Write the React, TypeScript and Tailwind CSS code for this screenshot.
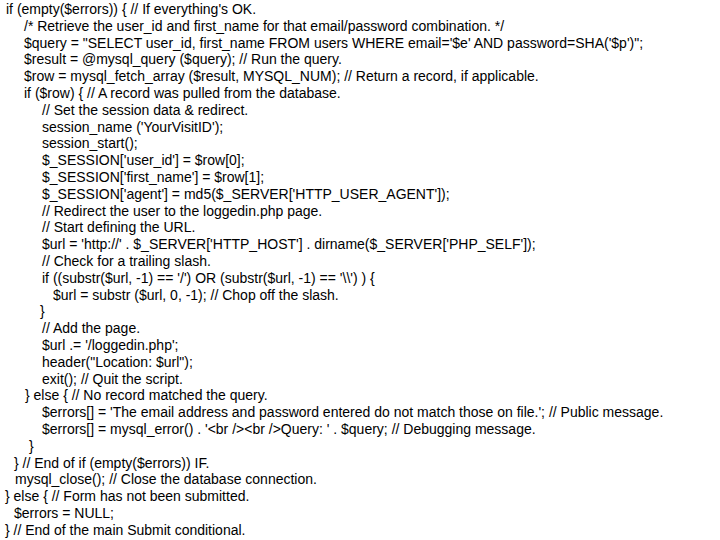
const lines: [number, string][] = [
  [6, "if (empty($errors)) { // If everything's OK."],
  [24, "/* Retrieve the user_id and first_name for that email/password combination. */"],
  [24, "$query = \"SELECT user_id, first_name FROM users WHERE email='$e' AND password=SHA('$p')\";"],
  [24, "$result = @mysql_query ($query); // Run the query."],
  [24, "$row = mysql_fetch_array ($result, MYSQL_NUM); // Return a record, if applicable."],
  [24, "if ($row) { // A record was pulled from the database."],
  [42, "// Set the session data & redirect."],
  [42, "session_name ('YourVisitID');"],
  [42, "session_start();"],
  [42, "$_SESSION['user_id'] = $row[0];"],
  [42, "$_SESSION['first_name'] = $row[1];"],
  [42, "$_SESSION['agent'] = md5($_SERVER['HTTP_USER_AGENT']);"],
  [42, "// Redirect the user to the loggedin.php page."],
  [42, "// Start defining the URL."],
  [42, "$url = 'http://' . $_SERVER['HTTP_HOST'] . dirname($_SERVER['PHP_SELF']);"],
  [42, "// Check for a trailing slash."],
  [42, "if ((substr($url, -1) == '/') OR (substr($url, -1) == '\\\\') ) {"],
  [53, "$url = substr ($url, 0, -1); // Chop off the slash."],
  [40, "}"],
  [42, "// Add the page."],
  [42, "$url .= '/loggedin.php';"],
  [42, "header(\"Location: $url\");"],
  [42, "exit(); // Quit the script."],
  [25, "} else { // No record matched the query."],
  [42, "$errors[] = 'The email address and password entered do not match those on file.'; // Public message."],
  [42, "$errors[] = mysql_error() . '<br /><br />Query: ' . $query; // Debugging message."],
  [29, "}"],
  [14, "} // End of if (empty($errors)) IF."],
  [15, "mysql_close(); // Close the database connection."],
  [5, "} else { // Form has not been submitted."],
  [14, "$errors = NULL;"],
  [5, "} // End of the main Submit conditional."],
];

export default function App() {
  return (
    <div className="w-[720px] h-[540px] bg-white overflow-hidden pt-px font-['Liberation_Sans',Arial,sans-serif] text-[14px] leading-[16.8px] text-black">
      {lines.map(([indent, text], i) => (
        <div key={i} className="whitespace-pre" style={{ paddingLeft: indent }}>
          {text}
        </div>
      ))}
    </div>
  );
}
